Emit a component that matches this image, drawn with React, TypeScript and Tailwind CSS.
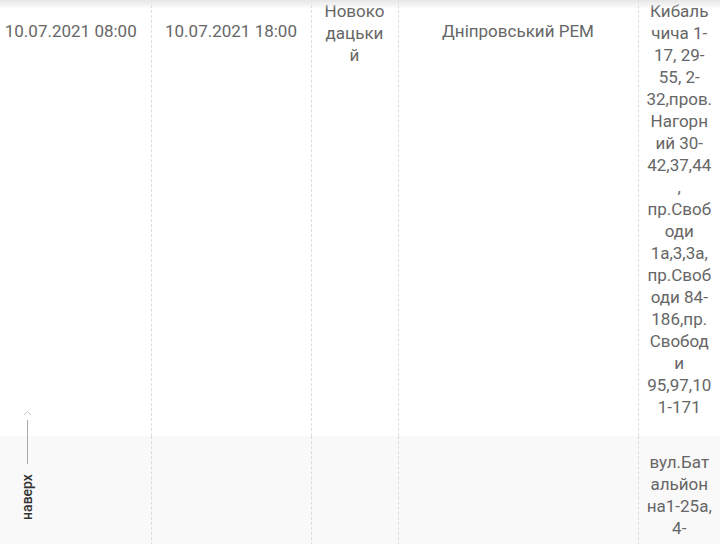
import React from 'react'

type Row = {
  start: string
  end: string
  place: string[]
  rem: string
  streets: string[]
}

const rows: Row[] = [
  {
    start: '10.07.2021 08:00',
    end: '10.07.2021 18:00',
    place: ['Новоко', 'дацьки', 'й'],
    rem: 'Дніпровський РЕМ',
    streets: [
      'Кибаль', 'чича 1-', '17, 29-', '55, 2-', '32,пров.', 'Нагорн', 'ий 30-', '42,37,44', ',',
      'пр.Своб', 'оди', '1а,3,3а,', 'пр.Своб', 'оди 84-', '186,пр.', 'Свобод', 'и', '95,97,10', '1-171',
    ],
  },
  {
    start: '',
    end: '',
    place: [],
    rem: '',
    streets: ['вул.Бат', 'альйон', 'на1-25а,', '4-'],
  },
]

const Lines: React.FC<{ lines: string[] }> = ({ lines }) => (
  <>
    {lines.map((l, i) => (
      <span key={i} className="block whitespace-nowrap">{l}</span>
    ))}
  </>
)

const App: React.FC = () => {
  return (
    <div className="relative w-[720px] h-[544px] overflow-hidden bg-white text-[17px] leading-[22px] text-[#666] font-['Roboto',sans-serif]">
      <table className="w-[720px] table-fixed border-collapse text-center">
        <colgroup>
          <col className="w-[151px]" />
          <col className="w-[160px]" />
          <col className="w-[87px]" />
          <col className="w-[240px]" />
          <col className="w-[82px]" />
        </colgroup>
        <tbody>
          {rows.map((r, i) => {
            const first = i === 0
            const cell = first ? 'pt-[20px]' : 'pt-[15px]'
            const tight = first ? 'pt-0' : 'pt-[15px]'
            return (
              <tr key={i} className={first ? 'h-[436px] bg-white' : 'h-[200px] bg-[#f9f9f9]'}>
                <td className={`${cell} pr-[9px] align-top whitespace-nowrap`}>{r.start}</td>
                <td className={`${cell} align-top border-l border-dashed border-[#dcdcdc]`}>{r.end}</td>
                <td className={`${tight} align-top border-l border-dashed border-[#dcdcdc]`}>
                  <Lines lines={r.place} />
                </td>
                <td className={`${cell} align-top border-l border-dashed border-[#dcdcdc]`}>{r.rem}</td>
                <td className={`${tight} align-top border-l border-dashed border-[#dcdcdc]`}>
                  <Lines lines={r.streets} />
                </td>
              </tr>
            )
          })}
        </tbody>
      </table>

      {/* shadow from sticky header above */}
      <div className="absolute top-0 left-0 right-0 h-[9px] bg-gradient-to-b from-[#e6e6e6] to-transparent pointer-events-none" />

      {/* back to top */}
      <div className="absolute left-[17px] top-[410px] flex flex-col items-center w-[20px]">
        <svg width="9" height="6" viewBox="0 0 9 6" className="mb-[4px]">
          <path d="M1 5 L4.5 1.5 L8 5" fill="none" stroke="#c8c8c8" strokeWidth="1" />
        </svg>
        <div className="w-px h-[44px] bg-[#aaa]" />
        <div className="mt-[10px] h-[46px] flex items-center justify-center">
          <span className="block -rotate-90 whitespace-nowrap text-[14px] font-medium text-[#333] leading-none">
            наверх
          </span>
        </div>
      </div>
    </div>
  )
}

export default App
